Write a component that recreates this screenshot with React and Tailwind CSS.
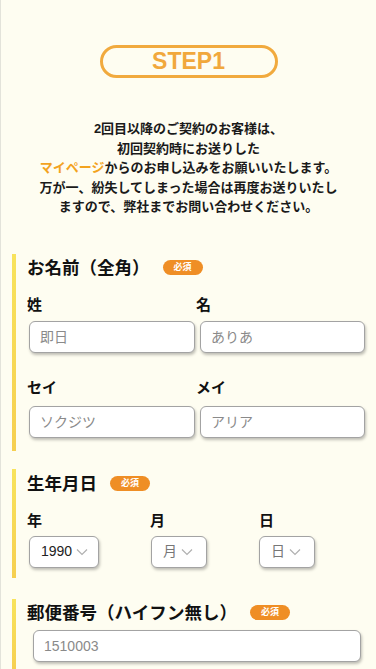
import React from 'react';

const Badge = () => (
  <span className="ml-[13px] inline-flex h-[15px] w-[40px] items-center justify-center rounded-full bg-[#ef8e25] text-[9px] font-bold leading-none text-white">
    必須
  </span>
);

const Section = ({ children, className }) => (
  <div className={`ml-[11px] flex ${className}`}>
    <div className="w-[4px] shrink-0 bg-gradient-to-b from-[#f8e35c] to-[#f6cf50]" />
    <div className="flex-1 pl-[11px]">{children}</div>
  </div>
);

const Heading = ({ children }) => (
  <div className="flex items-center">
    <h2 className="text-[17.5px] font-bold leading-[24px] text-[#111]">{children}</h2>
    <Badge />
  </div>
);

const TextBox = ({ placeholder, className }) => (
  <input
    type="text"
    placeholder={placeholder}
    className={`h-[32px] rounded-[6px] border border-[#a3a3a3] bg-white px-[10px] text-[14px] text-[#333] shadow-[1px_2px_3px_rgba(0,0,0,0.25)] outline-none placeholder:text-[#8a8a8a] ${className}`}
  />
);

const Chevron = () => (
  <svg width="12" height="8" viewBox="0 0 12 8" fill="none" className="ml-[4px]">
    <path d="M1 1.5l5 5 5-5" stroke="#b0b0b0" strokeWidth="1.2" />
  </svg>
);

const SelectBox = ({ value, muted, className }) => (
  <div className={`flex h-[32px] items-center rounded-[6px] border border-[#a3a3a3] bg-white pl-[11px] text-[14px] shadow-[1px_2px_3px_rgba(0,0,0,0.25)] ${muted ? 'text-[#777]' : 'text-[#222]'} ${className}`}>
    {value}
    <Chevron />
  </div>
);

const Label = ({ children, className }) => (
  <div className={`text-[15px] font-bold leading-[20px] text-[#111] ${className}`}>{children}</div>
);

export default function App() {
  return (
    <div className="min-h-[669px] border-l border-[#e3e3da] bg-[#fefdf1] font-['Liberation_Sans','Noto_Sans_CJK_JP',sans-serif] text-[#111]">
      <div className="flex justify-center pt-[45px]">
        <div className="flex h-[33px] w-[178px] items-center justify-center rounded-full border-[3px] border-[#f1aa3e] text-[23px] font-bold leading-none text-[#f1a83c]">
          STEP1
        </div>
      </div>

      <p className="mt-[41px] text-center text-[13px] font-bold leading-[19.5px] text-[#1a1a1a]">
        2回目以降のご契約のお客様は、<br />
        初回契約時にお送りした<br />
        <span className="text-[#f3a31f]">マイページ</span>からのお申し込みをお願いいたします。<br />
        万が一、紛失してしまった場合は再度お送りいたし<br />
        ますので、弊社までお問い合わせください。
      </p>

      <Section className="mt-[37px]">
        <div className="pt-[2px] pb-[13px]">
          <Heading>お名前（全角）</Heading>
          <div className="mt-[15px] grid grid-cols-[169px_169px]">
            <div>
              <Label>姓</Label>
              <TextBox placeholder="即日" className="ml-[2px] mt-[6px] w-[166px]" />
            </div>
            <div>
              <Label>名</Label>
              <TextBox placeholder="ありあ" className="ml-[4px] mt-[6px] w-[165px]" />
            </div>
          </div>
          <div className="mt-[25px] grid grid-cols-[169px_169px]">
            <div>
              <Label>セイ</Label>
              <TextBox placeholder="ソクジツ" className="ml-[2px] mt-[8px] w-[166px]" />
            </div>
            <div>
              <Label>メイ</Label>
              <TextBox placeholder="アリア" className="ml-[4px] mt-[8px] w-[165px]" />
            </div>
          </div>
        </div>
      </Section>

      <Section className="mt-[18px]">
        <div className="pt-[3px] pb-[10px]">
          <Heading>生年月日</Heading>
          <div className="mt-[15px] flex">
            <div className="w-[123px]">
              <Label>年</Label>
              <SelectBox value="1990" className="ml-[2px] mt-[5px] w-[70px]" />
            </div>
            <div className="w-[109px]">
              <Label>月</Label>
              <SelectBox value="月" muted className="ml-[1px] mt-[5px] w-[56px]" />
            </div>
            <div>
              <Label>日</Label>
              <SelectBox value="日" muted className="mt-[5px] w-[56px]" />
            </div>
          </div>
        </div>
      </Section>

      <Section className="mt-[21px]">
        <div className="pt-[2px] pb-[10px]">
          <Heading>郵便番号（ハイフン無し）</Heading>
          <TextBox placeholder="1510003" className="ml-[6px] mt-[5px] w-[328px]" />
        </div>
      </Section>
    </div>
  );
}
